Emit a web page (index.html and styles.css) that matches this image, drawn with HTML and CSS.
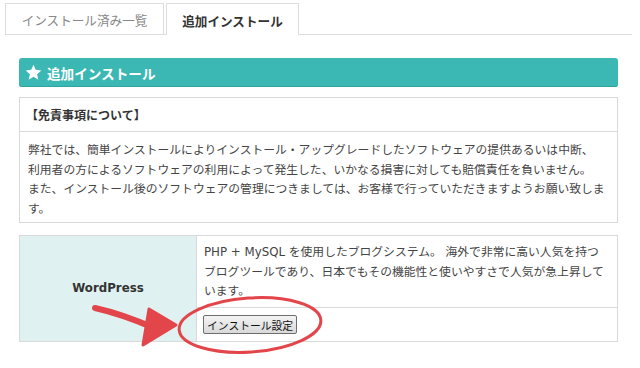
FILE: index.html
```html
<!DOCTYPE html>
<html lang="ja">
<head>
<meta charset="utf-8">
<title>追加インストール</title>
<link rel="stylesheet" href="styles.css">
</head>
<body>
<div class="page">
  <ul class="tabs">
    <li class="tab">インストール済み一覧</li>
    <li class="tab active">追加インストール</li>
  </ul>
  <div class="content">
    <h2 class="title">
      <svg class="star" viewBox="0 0 24 24" width="17" height="17"><polygon points="12,1 15.2,8.2 23,9 17.1,14.3 18.8,22.1 12,18.1 5.2,22.1 6.9,14.3 1,9 8.8,8.2" fill="#fff"/></svg>
      <span>追加インストール</span>
    </h2>
    <div class="notice">
      <div class="notice-head">【免責事項について】</div>
      <div class="notice-body">弊社では、簡単インストールによりインストール・アップグレードしたソフトウェアの提供あるいは中断、<br>利用者の方によるソフトウェアの利用によって発生した、いかなる損害に対しても賠償責任を負いません。<br>また、インストール後のソフトウェアの管理につきましては、お客様で行っていただきますようお願い致します。</div>
    </div>
    <table class="apps">
      <tr>
        <th class="app-name" rowspan="2">WordPress</th>
        <td class="app-desc">PHP + MySQL を使用したブログシステム。 海外で非常に高い人気を持つ<br>ブログツールであり、日本でもその機能性と使いやすさで人気が急上昇しています。</td>
      </tr>
      <tr>
        <td class="app-action"><button class="btn" type="button">インストール設定</button></td>
      </tr>
    </table>
  </div>
  <svg class="annot" width="640" height="368" viewBox="0 0 640 368">
    <path d="M95 308 Q122 314 154 328" fill="none" stroke="#e2464b" stroke-width="6" stroke-linecap="round"/>
    <polygon points="149,309 176,325 143,345" fill="#e2464b" stroke="#e2464b" stroke-width="3" stroke-linejoin="round"/>
    <ellipse cx="250" cy="325" rx="71" ry="27" fill="none" stroke="#e2464b" stroke-width="3" transform="rotate(-4 250 325)"/>
  </svg>
</div>
</body>
</html>
```

FILE: styles.css
```css
html, body {
  margin: 0;
  padding: 0;
  background: #fff;
}

body {
  font-family: "DejaVu Sans", "Noto Sans CJK JP", sans-serif;
  color: #333;
}

.page {
  position: relative;
  width: 640px;
  height: 368px;
  overflow: hidden;
}

.tabs {
  list-style: none;
  display: flex;
  align-items: flex-end;
  gap: 2px;
  margin: 3px 8px 0 5px;
  padding: 0;
  border-bottom: 1px solid #ddd;
  height: 31px;
}

.tab {
  box-sizing: border-box;
  height: 31px;
  width: 159px;
  border: 1px solid #ddd;
  border-bottom: none;
  display: flex;
  align-items: center;
  justify-content: center;
  font-family: "Noto Sans CJK JP", sans-serif;
  font-size: 12.6px;
  color: #888;
  background: #fff;
}

.tab.active {
  width: 133px;
  height: 32px;
  margin-bottom: -1px;
  color: #333;
  font-weight: bold;
  padding-top: 1px;
}

.content {
  margin: 23px 22px 0 19px;
}

.title {
  box-sizing: border-box;
  margin: 0;
  height: 29px;
  background: #3cb8b4;
  border-radius: 3px;
  box-shadow: inset 0 -1px 0 #2fa5a1;
  color: #fff;
  display: flex;
  align-items: center;
  gap: 5px;
  padding-left: 6px;
  font-family: "Noto Sans CJK JP", sans-serif;
  font-size: 13.6px;
  font-weight: bold;
}

.star {
  display: block;
}

.notice {
  margin-top: 10px;
  border: 1px solid #d9d9d9;
}

.notice-head {
  height: 33px;
  line-height: 33px;
  padding: 0 6px;
  border-bottom: 1px solid #d9d9d9;
  font-family: "Noto Sans CJK JP", sans-serif;
  font-size: 12px;
  font-weight: bold;
}

.notice-body {
  padding: 7px 8px 5px 8px;
  font-family: "Noto Sans CJK JP", sans-serif;
  font-size: 11.8px;
  line-height: 19.5px;
  color: #444;
}

.apps {
  margin-top: 12px;
  width: 100%;
  border-collapse: collapse;
  border: 1px solid #d9d9d9;
}

.apps th,
.apps td {
  border: 1px solid #d9d9d9;
  padding: 0;
}

.app-name {
  width: 176px;
  background: #dff2f1;
  font-size: 11.8px;
  font-weight: bold;
  color: #333;
  text-align: center;
  vertical-align: middle;
}

.app-desc {
  padding: 7px 7px 5px 7px !important;
  font-size: 11.8px;
  line-height: 19.5px;
  color: #444;
}

.app-action {
  height: 34px;
  box-sizing: border-box;
  padding: 1px 6px 0 6px !important;
  vertical-align: middle;
}

.btn {
  display: block;
  height: 19px;
  padding: 0 3px;
  font-family: "Noto Sans CJK JP", sans-serif;
  font-size: 10.8px;
  color: #111;
  background: linear-gradient(#f4f4f4, #d9d9d9);
  border: 1px solid #6e6e6e;
  border-radius: 2px;
  line-height: 16px;
}

.annot {
  position: absolute;
  left: 0;
  top: 0;
  pointer-events: none;
}
```
